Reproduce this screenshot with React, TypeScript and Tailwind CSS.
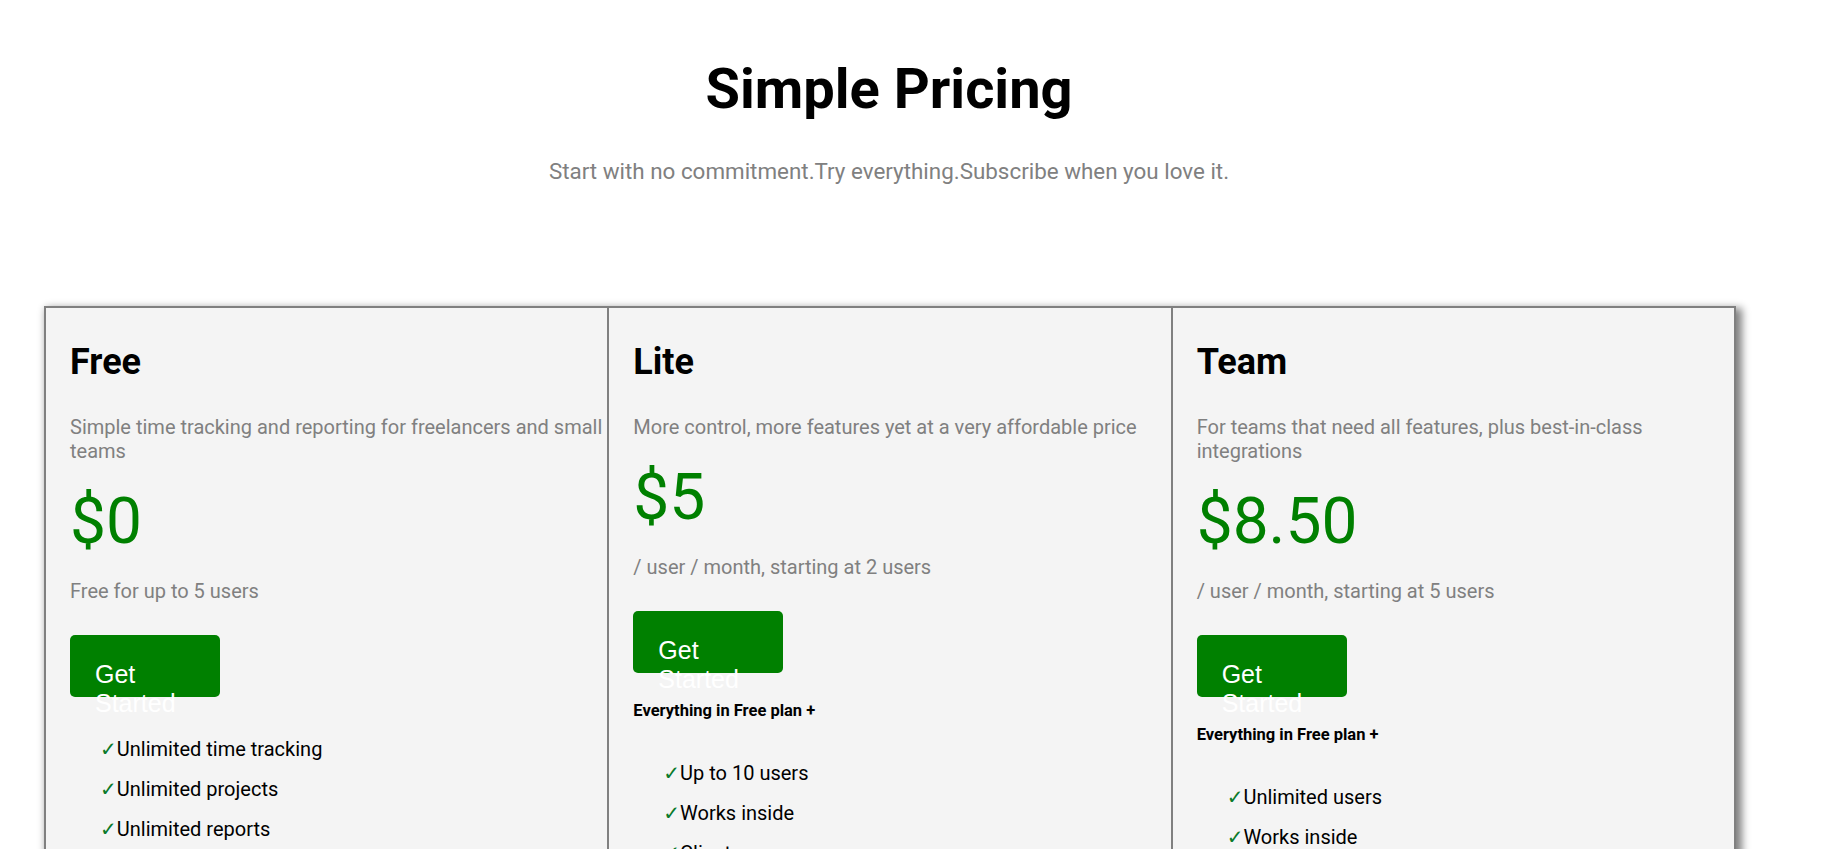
import React from 'react';

type Plan = {
  name: string;
  description: string;
  price: string;
  note: string;
  extra?: string;
  features: string[];
};

const plans: Plan[] = [
  {
    name: 'Free',
    description: 'Simple time tracking and reporting for freelancers and small teams',
    price: '$0',
    note: 'Free for up to 5 users',
    features: ['Unlimited time tracking', 'Unlimited projects', 'Unlimited reports', 'Unlimited users', 'Mobile apps'],
  },
  {
    name: 'Lite',
    description: 'More control, more features yet at a very affordable price',
    price: '$5',
    note: '/ user / month, starting at 2 users',
    extra: 'Everything in Free plan +',
    features: ['Up to 10 users', 'Works inside', 'Clients', 'Billable rates', 'Export data'],
  },
  {
    name: 'Team',
    description: 'For teams that need all features, plus best-in-class integrations',
    price: '$8.50',
    note: '/ user / month, starting at 5 users',
    extra: 'Everything in Free plan +',
    features: ['Unlimited users', 'Works inside', 'Integrations', 'Priority support', 'Custom reports'],
  },
];

const PlanCard: React.FC<{ plan: Plan }> = ({ plan }) => (
  <div className="border border-[#808080] bg-[#f4f4f4] pl-[24px] pt-[33px] pb-[40px]">
    <h2 className="text-[36px] font-bold leading-[normal] text-black">{plan.name}</h2>
    <p className="mt-[32px] text-[20px] leading-[normal] text-[#808080]">{plan.description}</p>
    <div className="mt-[21px] text-[64px] leading-[normal] text-[#008000]">{plan.price}</div>
    <p className="mt-[20px] text-[20px] leading-[normal] text-[#808080]">{plan.note}</p>

    {/* fixed-size button, label wraps and spills out like the original */}
    <div
      role="button"
      className="mt-[32px] h-[62px] w-[150px] cursor-pointer rounded-[5px] bg-[#008000] px-[25px] pt-[25px] text-[25px] leading-[normal] text-white font-['Liberation_Sans',Arial,sans-serif]"
    >
      Get Started
    </div>

    {plan.extra && (
      <p className="mt-[28px] text-[16.5px] font-bold leading-[normal] text-black">{plan.extra}</p>
    )}

    <ul className={plan.extra ? 'mt-[33px]' : 'mt-[32px]'}>
      {plan.features.map(f => (
        <li key={f} className="py-[8px] pl-[30px] text-[20px] leading-[normal] text-black">
          <span className="text-[#0a7a2a]">✓</span>
          {f}
        </li>
      ))}
    </ul>
  </div>
);

export default function App() {
  return (
    <div className="min-h-screen bg-white pt-[56px] pb-[60px] font-['Roboto','DejaVu_Sans',sans-serif]">
      <div className="ml-[44px] w-[1690px] text-center">
        <h1 className="text-[56px] font-bold leading-[normal] text-black">Simple Pricing</h1>
        <p className="mt-[36px] text-[22.4px] leading-[normal] text-[#808080]">
          Start with no commitment.Try everything.Subscribe when you love it.
        </p>
      </div>

      <div className="ml-[44px] mt-[122px] grid w-[1692px] grid-cols-3 border border-[#808080] shadow-[4px_4px_8px_2px_#808080]">
        {plans.map(p => (
          <PlanCard key={p.name} plan={p} />
        ))}
      </div>
    </div>
  );
}
